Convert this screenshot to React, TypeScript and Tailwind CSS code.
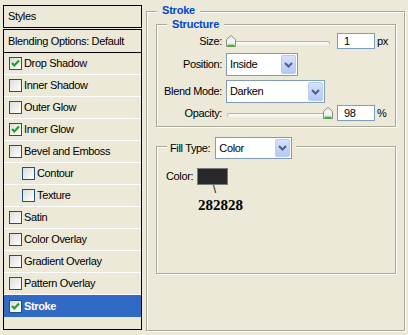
import React from "react";

function Check({ checked }: { checked?: boolean }) {
  return (
    <div className="w-[13px] h-[13px] shrink-0 border border-[#1c5180] bg-[linear-gradient(135deg,#dcdcd7,#ffffff)] relative">
      {checked && (
        <svg width="11" height="11" viewBox="0 0 11 11" className="absolute left-0 top-0">
          <path d="M2 5 L4.3 7.5 L9 2.5" fill="none" stroke="#21a121" strokeWidth="2.2" />
        </svg>
      )}
    </div>
  );
}

function Row({
  label,
  checked,
  indent,
  selected,
  last,
}: {
  label: string;
  checked?: boolean;
  indent?: boolean;
  selected?: boolean;
  last?: boolean;
}) {
  return (
    <div
      className={
        "h-[22px] flex items-center shrink-0 " +
        (indent ? "pl-[18px] " : "pl-[5px] ") +
        (selected ? "bg-[#316ac5] text-white font-bold " : "") +
        (last ? "" : "border-b border-white")
      }
    >
      <Check checked={checked} />
      <span className="ml-[2px]">{label}</span>
    </div>
  );
}

function Arrow() {
  return (
    <div className="w-[15px] h-full shrink-0 rounded-[2px] border border-[#b9cbf3] bg-[linear-gradient(180deg,#d6e2fd,#b3c8f6)] flex items-center justify-center">
      <svg width="9" height="6" viewBox="0 0 9 6">
        <path d="M1 1 L4.5 4.5 L8 1" fill="none" stroke="#4d6185" strokeWidth="2" />
      </svg>
    </div>
  );
}

function Select({ value, w, h }: { value: string; w: string; h: string }) {
  return (
    <div className={"border border-[#7f9db9] bg-white flex items-stretch p-[1px] " + w + " " + h}>
      <div className="flex-1 flex items-center pl-[2px]">{value}</div>
      <Arrow />
    </div>
  );
}

function Thumb() {
  return (
    <svg width="10" height="12" viewBox="0 0 10 12">
      <path d="M0.5 11.5 L0.5 4.5 L5 0.5 L9.5 4.5 L9.5 11.5 Z" fill="#f4f4ef" stroke="#8c8c84" />
      <path d="M1.5 10.5 L8.5 10.5" stroke="#21c121" strokeWidth="2" />
      <path d="M1.5 9 L8.5 9" stroke="#dcdcd4" strokeWidth="1" />
    </svg>
  );
}

function Slider({ right }: { right?: boolean }) {
  return (
    <div className="relative w-[107px] h-[16px] shrink-0">
      <div className="absolute left-[1px] right-[3px] top-[8px] h-[4px] rounded-[2px] border border-[#b3b2ab] border-b-[#f4f4f0] bg-[#f6f6f2]" />
      <div className={"absolute top-[2px] " + (right ? "right-0" : "left-0")}>
        <Thumb />
      </div>
    </div>
  );
}

function Input({ value }: { value: string }) {
  return (
    <div className="w-[38px] h-[16px] shrink-0 border border-[#7f9db9] bg-white flex items-center pl-[6px]">
      {value}
    </div>
  );
}

const etched = "border border-[#aca899] shadow-[1px_1px_0_#fff,inset_1px_1px_0_#fff]";

export default function App() {
  return (
    <div className="w-[408px] h-[335px] bg-[#ece9d8] flex items-start font-['Liberation_Sans',Arial,sans-serif] text-[11px] tracking-[-0.35px] text-black leading-[13px] overflow-hidden">
      {/* Left styles list */}
      <div className="ml-[3px] mt-[5px] w-[139px] flex flex-col shrink-0">
        <div className="h-[23px] border border-black flex items-center pl-[4px]">Styles</div>
        <div className="mt-[1px] h-[301px] border border-black flex flex-col">
          <div className="h-[23px] border-b border-black flex items-center pl-[4px] shrink-0">
            Blending Options: Default
          </div>
          <Row label="Drop Shadow" checked />
          <Row label="Inner Shadow" />
          <Row label="Outer Glow" />
          <Row label="Inner Glow" checked />
          <Row label="Bevel and Emboss" />
          <Row label="Contour" indent />
          <Row label="Texture" indent />
          <Row label="Satin" />
          <Row label="Color Overlay" />
          <Row label="Gradient Overlay" />
          <Row label="Pattern Overlay" />
          <Row label="Stroke" checked selected last />
        </div>
      </div>

      {/* Right: Stroke group */}
      <div className={"ml-[4px] mt-[11px] w-[259px] h-[320px] relative shrink-0 " + etched}>
        <span className="absolute left-[10px] top-[-8px] px-[5px] bg-[#ece9d8] text-[#0046d5] font-bold tracking-[-0.2px]">
          Stroke
        </span>

        {/* Structure */}
        <div className={"ml-[9px] mt-[12px] w-[240px] h-[103px] relative flex flex-col pt-[8px] " + etched}>
          <span className="absolute left-[10px] top-[-7px] px-[5px] bg-[#ece9d8] text-[#0046d5] font-bold tracking-[-0.2px]">
            Structure
          </span>
          <div className="flex items-center h-[16px]">
            <div className="w-[65px] text-right">Size:</div>
            <div className="ml-[4px]">
              <Slider />
            </div>
            <div className="ml-[4px]">
              <Input value="1" />
            </div>
            <span className="ml-[2px]">px</span>
          </div>
          <div className="flex items-center mt-[4px] h-[23px]">
            <div className="w-[65px] text-right">Position:</div>
            <div className="ml-[4px]">
              <Select value="Inside" w="w-[72px]" h="h-[23px]" />
            </div>
          </div>
          <div className="flex items-center mt-[4px] h-[23px]">
            <div className="w-[65px] text-right">Blend Mode:</div>
            <div className="ml-[4px]">
              <Select value="Darken" w="w-[99px]" h="h-[23px]" />
            </div>
          </div>
          <div className="flex items-center mt-[2px] h-[16px]">
            <div className="w-[65px] text-right">Opacity:</div>
            <div className="ml-[4px]">
              <Slider right />
            </div>
            <div className="ml-[4px]">
              <Input value="98" />
            </div>
            <span className="ml-[2px]">%</span>
          </div>
        </div>

        {/* Fill Type */}
        <div className={"ml-[9px] mt-[19px] w-[240px] h-[128px] relative flex flex-col pt-[21px] " + etched}>
          <div className="absolute left-[10px] top-[-10px] pl-[3px] pr-[4px] bg-[#ece9d8] flex items-center gap-[5px]">
            <span>Fill Type:</span>
            <Select value="Color" w="w-[77px]" h="h-[22px]" />
          </div>
          <div className="flex items-center h-[17px] pl-[9px]">
            <span>Color:</span>
            <div className="ml-[4px] w-[31px] h-[17px] border border-[#7a7a78] bg-[#282828]" />
          </div>
          <div className="mt-[-1px] ml-[56px] leading-[11px]">\</div>
          <div className="mt-[3px] ml-[41px] leading-[15px] font-['Liberation_Serif','Times_New_Roman',serif] font-bold text-[15px] tracking-normal">
            282828
          </div>
        </div>
      </div>
    </div>
  );
}
